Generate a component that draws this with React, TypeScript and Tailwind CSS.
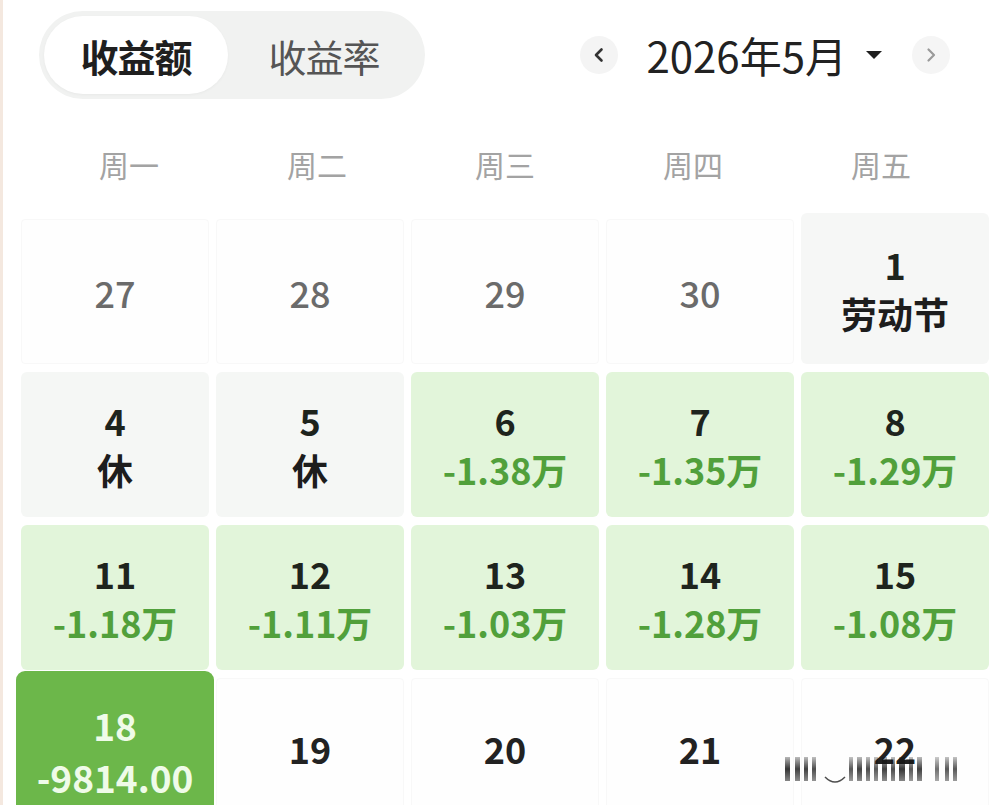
import React from "react";

type Cell = {
  day: string;
  sub?: string;
  kind: "other" | "rest" | "green" | "selected" | "plain" | "holiday";
};

const cells: Cell[] = [
  { day: "27", kind: "other" },
  { day: "28", kind: "other" },
  { day: "29", kind: "other" },
  { day: "30", kind: "other" },
  { day: "1", sub: "劳动节", kind: "holiday" },
  { day: "4", sub: "休", kind: "rest" },
  { day: "5", sub: "休", kind: "rest" },
  { day: "6", sub: "-1.38万", kind: "green" },
  { day: "7", sub: "-1.35万", kind: "green" },
  { day: "8", sub: "-1.29万", kind: "green" },
  { day: "11", sub: "-1.18万", kind: "green" },
  { day: "12", sub: "-1.11万", kind: "green" },
  { day: "13", sub: "-1.03万", kind: "green" },
  { day: "14", sub: "-1.28万", kind: "green" },
  { day: "15", sub: "-1.08万", kind: "green" },
  { day: "18", sub: "-9814.00", kind: "selected" },
  { day: "19", kind: "plain" },
  { day: "20", kind: "plain" },
  { day: "21", kind: "plain" },
  { day: "22", kind: "plain" },
];

const weekdays = ["周一", "周二", "周三", "周四", "周五"];

function CalendarCell({ c }: { c: Cell }) {
  if (c.kind === "selected") {
    return (
      <div className="mx-[-5px] mt-[-7px] h-[160px] rounded-[9px] bg-[#6cb74a] flex flex-col items-center justify-center leading-[52px] pb-[1px]">
        <div className="text-[37px] font-bold text-[#effbe8]">{c.day}</div>
        <div className="text-[37px] font-bold text-[#effbe8]">{c.sub}</div>
      </div>
    );
  }
  if (c.kind === "other") {
    return (
      <div className="h-[145px] bg-[#fefefe] border border-[#f8f8f8] rounded-[4px] flex items-center justify-center">
        <div className="text-[36px] font-medium text-[#6b6b6b]">{c.day}</div>
      </div>
    );
  }
  if (c.kind === "plain") {
    return (
      <div className="h-[145px] bg-[#fefefe] border border-[#f8f8f8] rounded-[4px] flex items-center justify-center pb-[6px]">
        <div className="text-[36px] font-bold text-[#222222]">{c.day}</div>
      </div>
    );
  }
  const bg =
    c.kind === "green"
      ? "bg-[#e2f5da]"
      : c.kind === "holiday"
      ? "bg-[#f6f7f6] mt-[-6px] h-[151px]"
      : "bg-[#f5f7f5]";
  const subColor = c.kind === "green" ? "text-[#51a03b]" : "text-[#1d1d1d]";
  return (
    <div className={`h-[145px] rounded-[6px] flex flex-col items-center justify-center leading-[49px] ${bg}`}>
      <div className="text-[36px] font-bold text-[#1e241d]">{c.day}</div>
      <div className={`text-[36px] font-bold ${subColor}`}>{c.sub}</div>
    </div>
  );
}

function Watermark() {
  const bars: [number, number, number][] = [
    [0, 5, 0.85], [10, 5, 0.8], [19, 4, 0.8], [27, 4, 0.75],
    [64, 4, 0.7], [72, 5, 0.8], [81, 4, 0.75], [89, 4, 0.7], [97, 5, 0.8], [106, 4, 0.75],
    [114, 6, 0.85], [124, 4, 0.7], [132, 5, 0.8], [150, 4, 0.6], [160, 4, 0.7], [168, 4, 0.7],
  ];
  return (
    <svg
      className="absolute left-[782px] top-[755px]"
      width="190"
      height="30"
      viewBox="0 0 190 30"
    >
      <defs>
        <linearGradient id="fade" x1="0" y1="0" x2="0" y2="1">
          <stop offset="0" stopColor="#111" stopOpacity="0.35" />
          <stop offset="0.5" stopColor="#111" stopOpacity="1" />
          <stop offset="1" stopColor="#111" stopOpacity="0.6" />
        </linearGradient>
      </defs>
      {bars.map(([x, w, o], i) => (
        <rect key={i} x={x} y={2} width={w} height={24} fill="url(#fade)" opacity={o} />
      ))}
      <path d="M40 22 Q50 32 60 22" stroke="#222" strokeWidth="1.5" fill="none" opacity="0.8" />
    </svg>
  );
}

export default function App() {
  return (
    <div className="relative w-[990px] h-[805px] overflow-hidden bg-white border-l-[3px] border-[#f4e8df] font-['Noto_Sans_CJK_SC','Noto_Sans',sans-serif]">
      {/* Top bar */}
      <div className="flex items-center pt-[11px] pl-[36px] pr-[40px]">
        <div className="flex w-[386px] h-[88px] rounded-full bg-[#f1f2f1] p-[5px]">
          <div className="w-[184px] rounded-full bg-white flex items-center justify-center shadow-[0_1px_3px_rgba(0,0,0,0.04)]">
            <span className="text-[38px] font-bold text-[#1f1f1f] tracking-[-1px]">收益额</span>
          </div>
          <div className="flex-1 flex items-center justify-center">
            <span className="text-[38px] text-[#555555] tracking-[-1px]">收益率</span>
          </div>
        </div>
        <div className="ml-auto flex items-center">
          <div className="w-[38px] h-[38px] rounded-full bg-[#f4f4f4] flex items-center justify-center">
            <svg width="14" height="18" viewBox="0 0 14 18">
              <path d="M9.5 3.5 L4 9 L9.5 14.5" stroke="#333" strokeWidth="2.6" fill="none" strokeLinecap="round" strokeLinejoin="round" />
            </svg>
          </div>
          <span className="ml-[28px] text-[42px] leading-[50px] text-[#222222]">2026年5月</span>
          <svg className="ml-[18px]" width="18" height="12" viewBox="0 0 18 12">
            <path d="M1 2 L17 2 L9 10 Z" fill="#1f1f1f" />
          </svg>
          <div className="ml-[29px] w-[38px] h-[38px] rounded-full bg-[#f5f5f5] flex items-center justify-center">
            <svg width="14" height="18" viewBox="0 0 14 18">
              <path d="M4.5 3.5 L10 9 L4.5 14.5" stroke="#9a9a9a" strokeWidth="2.2" fill="none" strokeLinecap="round" strokeLinejoin="round" />
            </svg>
          </div>
        </div>
      </div>

      {/* Weekdays */}
      <div className="ml-[32px] grid grid-cols-[repeat(5,188px)] h-[119px] pt-[12px] items-center">
        {weekdays.map((w) => (
          <div key={w} className="text-center text-[30px] text-[#a3a3a3]">
            {w}
          </div>
        ))}
      </div>

      {/* Days */}
      <div className="ml-[18px] pt-[1px] grid grid-cols-[repeat(5,188px)] gap-x-[7px] gap-y-[8px]">
        {cells.map((c) => (
          <CalendarCell key={c.day} c={c} />
        ))}
      </div>

      <Watermark />
    </div>
  );
}
